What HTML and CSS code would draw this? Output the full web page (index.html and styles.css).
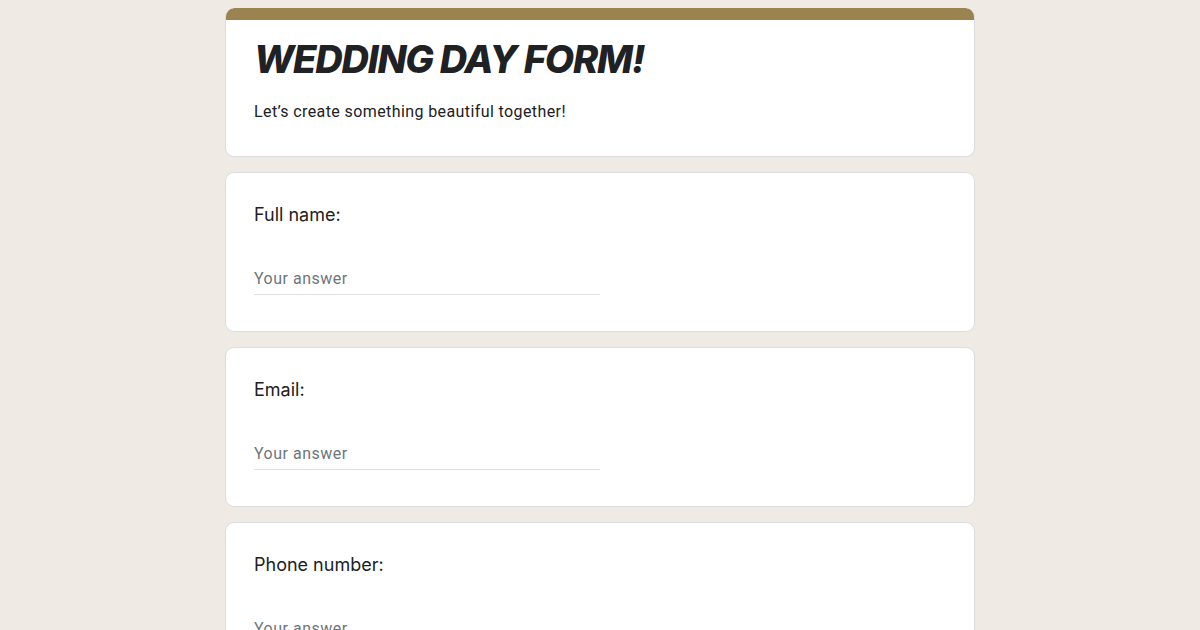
FILE: index.html
```html
<!DOCTYPE html>
<html lang="en">
<head>
<meta charset="utf-8">
<title>Wedding Day Form</title>
<link rel="stylesheet" href="styles.css">
</head>
<body>
<main class="form">
  <section class="card header-card">
    <div class="band"></div>
    <div class="header-body">
      <h1 class="title">WEDDING DAY FORM!</h1>
      <p class="desc">Let’s create something beautiful together!</p>
    </div>
  </section>
  <section class="card question">
    <div class="label">Full name:</div>
    <div class="answer">Your answer</div>
  </section>
  <section class="card question">
    <div class="label">Email:</div>
    <div class="answer">Your answer</div>
  </section>
  <section class="card question">
    <div class="label">Phone number:</div>
    <div class="answer">Your answer</div>
  </section>
</main>
</body>
</html>
```
FILE: styles.css
```css
html, body {
  margin: 0;
  padding: 0;
  background: #efebe4;
}
body {
  padding-top: 8px;
  font-family: Roboto, "Liberation Sans", sans-serif;
  color: #202124;
}
.form {
  width: 750px;
  margin: 0 auto;
  display: flex;
  flex-direction: column;
  gap: 15px;
}
.card {
  background: #ffffff;
  border: 1px solid #dadce0;
  border-radius: 9px;
  box-sizing: border-box;
}
.header-card {
  border-top: none;
  overflow: hidden;
  height: 149px;
}
.band {
  height: 12px;
  background: #9b8350;
  margin: 0 -1px;
  border-radius: 9px 9px 0 0;
}
.header-body {
  padding: 17px 28px 0 28px;
}
.title {
  margin: 0;
  font-family: Inter, "Liberation Sans", sans-serif;
  font-size: 38px;
  line-height: 44px;
  font-weight: 800;
  font-style: italic;
  letter-spacing: -1.2px;
  color: #202124;
}
.desc {
  margin: 19px 0 0 0;
  font-family: Roboto, "Liberation Sans", sans-serif;
  font-size: 16px;
  line-height: 24px;
  letter-spacing: 0.4px;
  color: #202124;
}
.question {
  height: 160px;
  padding: 28px 28px 0 28px;
}
.label {
  font-family: Inter, "Liberation Sans", sans-serif;
  font-size: 18px;
  line-height: 28px;
  color: #202124;
}
.answer {
  margin-top: 35px;
  width: 346px;
  height: 31px;
  box-sizing: border-box;
  line-height: 30px;
  border-bottom: 1px solid #e0e0e0;
  font-family: Roboto, "Liberation Sans", sans-serif;
  font-size: 16px;
  letter-spacing: 0.5px;
  color: #70757a;
}
```
